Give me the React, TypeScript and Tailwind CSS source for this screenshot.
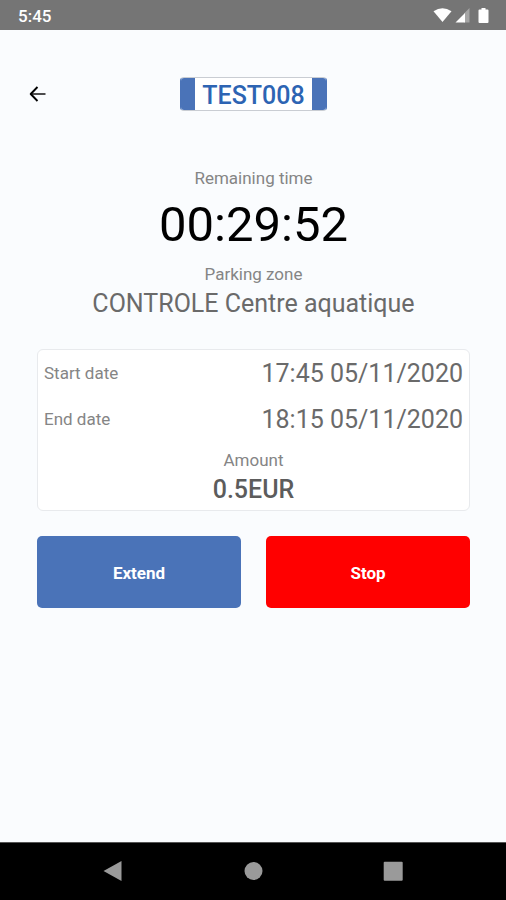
import React from "react";

const StatusBar = () => {
  return (
    <div className="flex h-[30px] shrink-0 items-center justify-between bg-[#757575] pt-0.5 pr-4 pl-[18px] text-white">
      <span className="text-[17px] leading-5 font-medium">5:45</span>
      <div className="flex items-center">
        <svg className="h-4 w-[58px]" viewBox="0 0 58 16" fill="currentColor" aria-hidden="true">
          {/* Wifi */}
          <path d="M1.500 3.200Q10.500 -2.600 19.500 3.200L10.500 14Z" />
          {/* Signal */}
          <path d="M37.500 0V14.500H32V5.500Z" fillOpacity="0.35" />
          <path d="M33 5V14.500H23.500Z" />
          {/* Battery */}
          <path d="M49.500 0H53.500V1.600H55.500Q56.500 1.600 56.500 2.600V14Q56.500 15 55.500 15H47.500Q46.500 15 46.500 14V2.600Q46.500 1.600 47.500 1.600H49.500Z" />
        </svg>
      </div>
    </div>
  );
};

const Header = () => {
  return (
    <header className="grid grid-cols-[1fr_auto_1fr] items-center pl-px">
      <button type="button" aria-label="Back" className="ml-[25px] w-6 text-black">
        <svg className="h-6 w-6" viewBox="0 0 24 24" fill="none" stroke="currentColor">
          <path d="M5 12H19.500" strokeWidth="1.400" />
          <path d="M11.500 5L4.700 12L11.500 19" strokeWidth="1.900" strokeLinejoin="round" />
        </svg>
      </button>
      <div className="flex h-[34px] overflow-hidden rounded border border-[#c9cdd3] border-x-[#4a73b8] bg-white">
        <span className="w-3.5 bg-[#4a73b8]" />
        <span className="px-[7px] text-[25px] leading-9 font-medium text-[#2d64b3]">TEST008</span>
        <span className="w-3.5 bg-[#4a73b8]" />
      </div>
    </header>
  );
};

const DateRow = ({ label, value }: { label: string; value: string }) => {
  return (
    <div className="flex h-[46px] items-center justify-between">
      <dt className="text-[17px] text-[#858585]">{label}</dt>
      <dd className="text-[25px] text-[#6a6a6a]">{value}</dd>
    </div>
  );
};

const NavBar = () => {
  return (
    <nav className="grid h-[58px] shrink-0 grid-cols-3 items-center justify-items-center border-t border-[#555] bg-black px-[43px] pb-0.5 text-[#9a9a9a]">
      <button type="button" aria-label="Back">
        <svg className="h-6 w-6" viewBox="0 0 24 24" fill="currentColor">
          <path d="M20.500 2V22L2.500 12Z" />
        </svg>
      </button>
      <button type="button" aria-label="Home">
        <svg className="h-6 w-6" viewBox="0 0 24 24" fill="currentColor">
          <circle cx="12.500" cy="12" r="9" />
        </svg>
      </button>
      <button type="button" aria-label="Recent apps">
        <svg className="h-6 w-6" viewBox="0 0 24 24" fill="currentColor">
          <rect x="2.700" y="2.700" width="19" height="19" rx="1" />
        </svg>
      </button>
    </nav>
  );
};

const App = () => {
  return (
    <div className="flex min-h-screen flex-col bg-[#fafcfe] font-[Roboto,sans-serif]">
      <StatusBar />
      <div className="flex-1 pt-[47px]">
        <Header />
        <main className="pr-9 pl-[37px]">
          {/* Countdown and zone */}
          <section className="mt-[57px] text-center">
            <h2 className="text-[17px] leading-5 text-[#858585]">Remaining time</h2>
            <p className="mt-[7px] text-[49px] leading-[60px] text-black">00:29:52</p>
            <h2 className="mt-[9px] text-[17px] leading-5 text-[#858585]">Parking zone</h2>
            <p className="mt-[5px] text-[25px] leading-[30px] text-[#6a6a6a]">CONTROLE Centre aquatique</p>
          </section>

          {/* Ticket details */}
          <dl className="mt-[30px] rounded-md border border-[#e8eaed] bg-white px-1.5 pt-px pb-[5px]">
            <DateRow label="Start date" value="17:45 05/11/2020" />
            <DateRow label="End date" value="18:15 05/11/2020" />
            <div className="pt-[7px] text-center">
              <dt className="text-[17px] leading-5 text-[#858585]">Amount</dt>
              <dd className="mt-[5px] text-[25px] leading-[30px] font-medium text-[#5c5c5c]">0.5EUR</dd>
            </div>
          </dl>

          <div className="mt-[25px] grid grid-cols-2 gap-[25px] text-[17px] font-bold text-white">
            <button type="button" className="h-[72px] rounded-[5px] bg-[#4a73b8] pt-1">
              Extend
            </button>
            <button type="button" className="h-[72px] rounded-[5px] bg-[#ff0000] pt-1">
              Stop
            </button>
          </div>
        </main>
      </div>
      <NavBar />
    </div>
  );
};

export default App;
